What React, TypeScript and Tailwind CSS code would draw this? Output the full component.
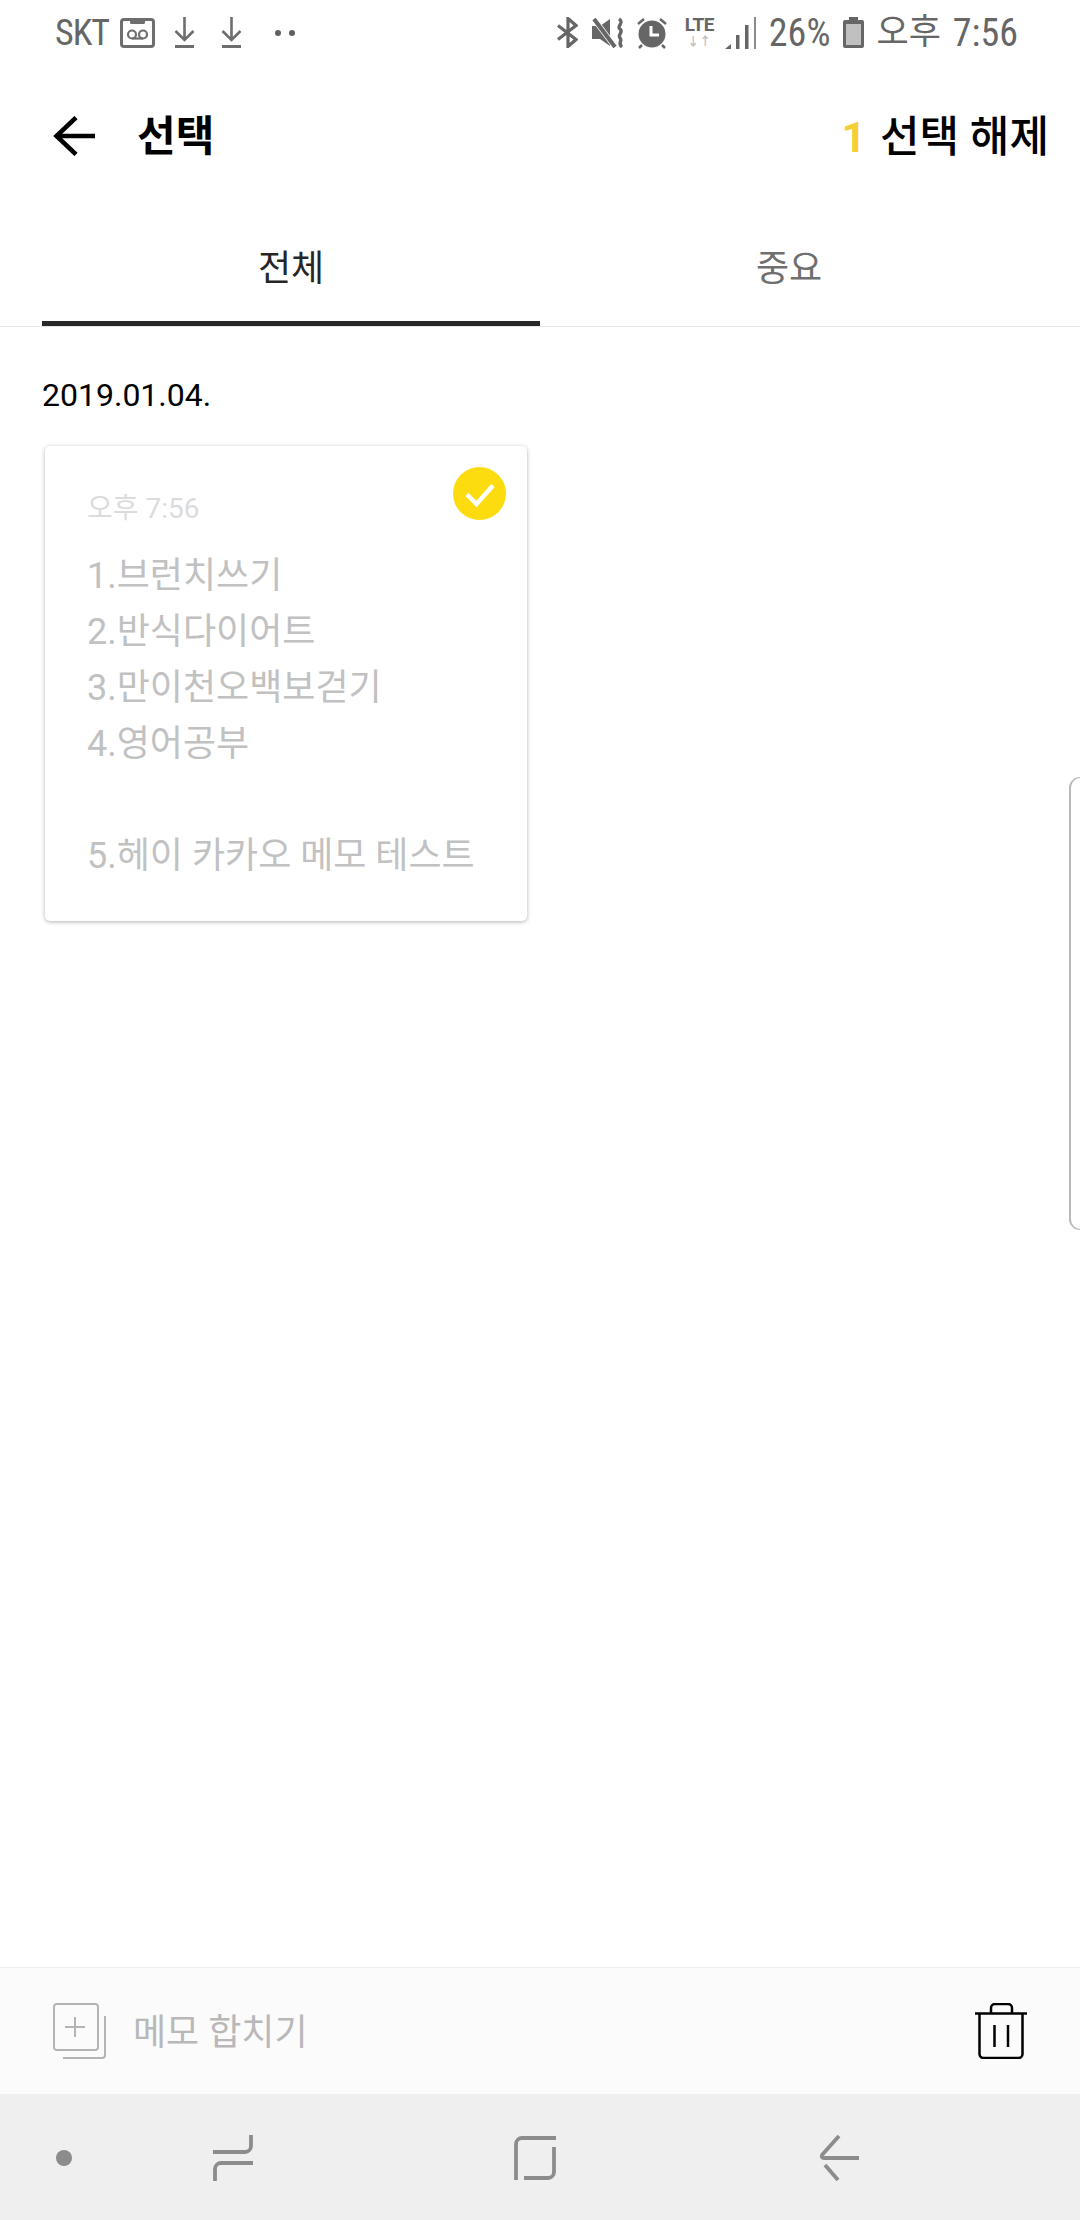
const KR = { fontFamily: '"Roboto", "Noto Sans CJK KR", sans-serif' };

const memoLines = ["1.브런치쓰기", "2.반식다이어트", "3.만이천오백보걷기", "4.영어공부", "", "5.헤이 카카오 메모 테스트"];

function VoicemailIcon() {
  return (
    <svg width="35" height="30" viewBox="0 0 35 30" fill="none" stroke="#6e6e6e">
      <rect x="1.500" y="1.500" width="32" height="27" rx="2.500" strokeWidth="3" />
      <path d="M10 2h15v2.500a1.500 1.500 0 0 1-1.500 1.500h-12A1.500 1.500 0 0 1 10 4.500z" fill="#6e6e6e" stroke="none" />
      <circle cx="12" cy="16.500" r="4" strokeWidth="2.200" />
      <circle cx="23" cy="16.500" r="4" strokeWidth="2.200" />
      <path d="M12 20.500h11" strokeWidth="2.200" />
    </svg>
  );
}

function DownloadIcon() {
  return (
    <svg width="21" height="31" viewBox="0 0 21 31" fill="none" stroke="#6e6e6e">
      <path d="M10.500 0v23M1.500 14l9 9 9-9" strokeWidth="2.600" />
      <path d="M1 29.500h19" strokeWidth="3" />
    </svg>
  );
}

function StatusBar() {
  return (
    <div className="flex h-[65px] items-center justify-between pl-[55px] pr-[62px] text-[#666666]">
      <div className="flex items-center">
        <span className="text-[36px] leading-none tracking-[-1px] [font-stretch:condensed]">SKT</span>
        <span className="ml-[11px] flex"><VoicemailIcon /></span>
        <span className="ml-[19px] flex"><DownloadIcon /></span>
        <span className="ml-[26px] flex"><DownloadIcon /></span>
        <span className="ml-[33px] flex gap-[8px]">
          <span className="h-[6px] w-[6px] rounded-full bg-[#5f5f5f]" />
          <span className="h-[6px] w-[6px] rounded-full bg-[#5f5f5f]" />
        </span>
      </div>
      <div className="flex items-center">
        <svg width="21" height="31" viewBox="0 0 21 31" fill="none" stroke="#666666" strokeWidth="3.200">
          <path d="M1 8.500l18 14-8 7V1.500l8 7-18 14" />
        </svg>
        <svg className="ml-[14px]" width="34" height="32" viewBox="0 0 34 32" fill="#666666">
          <path d="M0 9h8l10-7v27l-10-7H0z" />
          <path d="M2 2l21 28" stroke="#ffffff" strokeWidth="5.500" />
          <path d="M2 2l21 28" stroke="#666666" strokeWidth="4" />
          <path d="M27 2c6 4-3 7 1 10s-3 6 0 9-3 5 2 9" fill="none" stroke="#666666" strokeWidth="3.400" />
        </svg>
        <svg className="ml-[10px]" width="32" height="32" viewBox="0 0 32 32">
          <circle cx="16" cy="17" r="13.500" fill="#666666" />
          <path d="M15 9v9h8" fill="none" stroke="#ffffff" strokeWidth="3" />
          <path d="M2 7l6-5M30 7l-6-5M6 28l-3 3M26 28l3 3" stroke="#666666" strokeWidth="2.500" />
        </svg>
        <div className="ml-[15px] flex w-[33px] flex-col items-center">
          <span className="text-[19px] font-bold leading-[16px] tracking-[-0.5px]">LTE</span>
          <span className="mt-[3px] text-[12px] font-bold leading-[12px] text-[#c0c0c0]">↓↑</span>
        </div>
        <svg className="ml-[9px]" width="31" height="32" viewBox="0 0 31 32" fill="#666666">
          <path d="M0 32l6-5v5zM11 18h3.500v14H11zM20 8h3.500v24H20z" />
          <path d="M29 0h2v32h-2z" fill="#8a8a8a" />
        </svg>
        <span className="ml-[13px] text-[38px] leading-none [font-stretch:condensed]">26%</span>
        <svg className="ml-[13px]" width="21" height="31" viewBox="0 0 21 31">
          <path d="M6 0h9v3h4a2 2 0 0 1 2 2v24a2 2 0 0 1-2 2H2a2 2 0 0 1-2-2V5a2 2 0 0 1 2-2h4z" fill="#666666" />
          <rect x="3" y="7" width="15" height="21" fill="#c0c0c0" />
        </svg>
        <span className="ml-[12px] flex items-center gap-[12px] leading-none">
          <span className="text-[35px]">오후</span>
          <span className="text-[38px] [font-stretch:condensed]">7:56</span>
        </span>
      </div>
    </div>
  );
}

function BackArrow() {
  return (
    <svg width="42" height="40" viewBox="0 0 42 40" fill="none" stroke="#000000" strokeWidth="4.500">
      <path d="M42 20H4" />
      <path d="M23 1.500L3.500 20 23 38.500" />
    </svg>
  );
}

function CheckBadge() {
  return (
    <span className="absolute right-[21px] top-[21px] flex h-[53px] w-[53px] rounded-full bg-[#fcdc0e]">
      <svg width="53" height="53" viewBox="0 0 53 53" fill="none" stroke="#ffffff" strokeWidth="4.500">
        <path d="M14 27.500l9.500 9.500L40 18.500" />
      </svg>
    </span>
  );
}

function MergeIcon() {
  return (
    <svg width="53" height="56" viewBox="0 0 53 56" fill="none" stroke="#b4b4b4" strokeWidth="2">
      <rect x="1" y="1" width="44" height="46" rx="3" />
      <path d="M12 24h20M22 14v20" />
      <path d="M52 13v39a3 3 0 0 1-3 3H10" />
    </svg>
  );
}

function TrashIcon() {
  return (
    <svg width="52" height="56" viewBox="0 0 52 56" fill="none" stroke="#000000" strokeWidth="2.500">
      <path d="M0 10.500h52" />
      <path d="M4.500 10.500V51a4 4 0 0 0 4 4h35a4 4 0 0 0 4-4V10.500" />
      <path d="M16 10.500V5a4 4 0 0 1 4-4h13a4 4 0 0 1 4 4v5.500" />
      <path d="M19.500 22v22M33 22v22" />
    </svg>
  );
}

function NavBar() {
  return (
    <div className="flex h-[126px] items-center bg-[#efefef] pt-[2px]">
      <span className="ml-[56px] h-[16px] w-[16px] rounded-full bg-[#8c8c8c]" />
      <svg className="ml-[141px]" width="40" height="46" viewBox="0 0 40 46" fill="none" stroke="#8c8c8c" strokeWidth="3.800">
        <path d="M38 0v11a6 6 0 0 1-6 6H0" />
        <path d="M40 28H8a6 6 0 0 0-6 6v12" />
      </svg>
      <svg className="ml-[261px]" width="42" height="44" viewBox="0 0 42 44" fill="none" stroke="#8c8c8c" strokeWidth="3.800">
        <path d="M2 44V8a6 6 0 0 1 6-6h34" />
        <path d="M40 11v25a6 6 0 0 1-6 6H10" />
      </svg>
      <svg className="ml-[263px]" width="40" height="46" viewBox="0 0 40 46" fill="none" stroke="#8c8c8c" strokeWidth="3.800">
        <path d="M20 1L3 20q-1 3 2 3h35" />
        <path d="M6 30l13 15" />
      </svg>
    </div>
  );
}

export default function App() {
  return (
    <div className="flex h-[2220px] w-[1080px] flex-col overflow-hidden bg-white" style={KR}>
      <StatusBar />

      {/* Header */}
      <div className="flex h-[142px] items-center justify-between pl-[53px] pr-[31px]">
        <div className="flex items-center">
          <BackArrow />
          <h1 className="ml-[42px] pt-[2px] text-[42px] font-bold leading-none text-black">선택</h1>
        </div>
        <div className="flex items-center pt-[2px] text-[43px] font-medium leading-none">
          <span className="mr-[14px] font-bold text-[#f4cf35]">1</span>
          <span className="text-black">선택 해제</span>
        </div>
      </div>

      {/* Tabs */}
      <div className="flex h-[120px] border-b border-[#e6e6e6] px-[42px]">
        <div className="flex w-[498px] items-center justify-center border-b-[5px] border-[#282828] pt-[10px] text-[36px] text-[#262626]">
          전체
        </div>
        <div className="flex w-[498px] items-center justify-center border-b-[5px] border-transparent pt-[10px] text-[36px] text-[#6f6f6f]">
          중요
        </div>
      </div>

      {/* Memo list */}
      <div className="relative flex-1 px-[42px]">
        <div className="mt-[50px] text-[32px] leading-[36px] text-black">2019.01.04.</div>
        <div className="relative ml-[3px] mt-[33px] h-[475px] w-[482px] rounded-[5px] bg-white pl-[42px] pt-[45px] shadow-[0_1px_4px_rgba(0,0,0,0.3)]">
          <CheckBadge />
          <div className="text-[28px] leading-[36px] text-[#dcdcdc]">오후 7:56</div>
          <div className="mt-[21px] text-[36px] leading-[56px] text-[#c1c1c1]">
            {memoLines.map((line, i) => (
              <div key={i} className="h-[56px] whitespace-pre">{line}</div>
            ))}
          </div>
        </div>
        {/* Edge panel handle */}
        <div className="absolute right-0 top-[450px] h-[453px] w-[11px] rounded-l-[14px] border-y border-l-2 border-[#b9b9b9]" />
      </div>

      {/* Bottom bar */}
      <div className="flex h-[127px] items-center justify-between border-t border-[#efefef] bg-[#fbfbfb] pl-[53px] pr-[53px]">
        <div className="flex items-center">
          <MergeIcon />
          <span className="ml-[27px] pt-[3px] text-[36px] text-[#b8b8b8]">메모 합치기</span>
        </div>
        <TrashIcon />
      </div>

      <NavBar />
    </div>
  );
}
